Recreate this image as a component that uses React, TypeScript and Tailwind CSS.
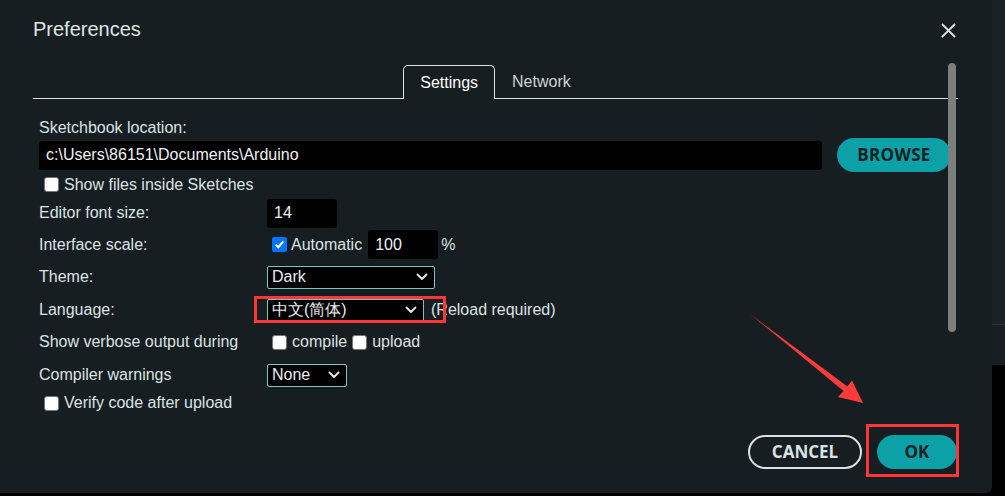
import React from "react"

const font = { fontFamily: '"Liberation Sans", Arial, sans-serif' }

function Chevron() {
  return (
    <svg width="12" height="8" viewBox="0 0 12 8" className="shrink-0">
      <path d="M1.5 1.5 L6 6 L10.5 1.5" fill="none" stroke="#e6eaea" strokeWidth="1.8" strokeLinecap="round" strokeLinejoin="round" />
    </svg>
  )
}

function Select({ value, width }: { value: string; width: string }) {
  return (
    <div className={`${width} h-[23px] bg-black border border-[#7cc4c6] rounded-[2px] flex items-center justify-between pl-[4px] pr-[6px] text-[16px] text-[#e8eded]`}>
      <span>{value}</span>
      <Chevron />
    </div>
  )
}

function Box({ checked = false }: { checked?: boolean }) {
  if (checked) {
    return (
      <span className="w-[15px] h-[15px] rounded-[2px] bg-[#0075ff] flex items-center justify-center shrink-0">
        <svg width="11" height="11" viewBox="0 0 11 11">
          <path d="M1.8 5.6 L4.3 8.2 L9.3 2.4" fill="none" stroke="white" strokeWidth="2" />
        </svg>
      </span>
    )
  }
  return <span className="w-[15px] h-[15px] rounded-[3px] bg-white border border-[#767676] shrink-0" />
}

function Row({ h, label, children }: { h: string; label?: string; children?: React.ReactNode }) {
  return (
    <div className={`${h} flex items-center`}>
      <div className="w-[228px] shrink-0">{label}</div>
      {children}
    </div>
  )
}

export default function App() {
  return (
    <div className="w-[1005px] h-[496px] bg-black relative overflow-hidden flex flex-col" style={font}>
      <div className="flex h-[493px]">
        {/* dialog */}
        <div className="w-[992px] h-full bg-[#171e21] rounded-br-[6px] relative flex flex-col text-[#dae3e3]">
          <div className="flex items-center justify-between pl-[33px] pr-[36px] pt-[13px] h-[44px]">
            <span className="text-[20px] text-[#dfe5e5]">Preferences</span>
            <svg width="15" height="15" viewBox="0 0 15 15" className="mt-[3px]">
              <path d="M1 1 L14 14 M14 1 L1 14" stroke="#dae3e3" strokeWidth="1.8" />
            </svg>
          </div>

          {/* tabs */}
          <div className="ml-[33px] w-[925px] mt-[21px] h-[34px] border-b border-[#dae3e3] flex justify-center items-end">
            <div className="h-[34px] px-[16px] border border-b-0 border-[#dae3e3] rounded-t-[5px] bg-[#171e21] -mb-px flex items-center text-[16px] text-white">
              Settings
            </div>
            <div className="h-[33px] px-[17px] flex items-center text-[16px] text-[#cdd3d3]">Network</div>
          </div>

          {/* settings */}
          <div className="pl-[39px] pt-[19px] flex flex-col text-[16px]">
            <div className="h-[20px] flex items-center">Sketchbook location:</div>
            <div className="h-[34px] flex items-center">
              <div className="w-[783px] h-[29px] bg-black rounded-[3px] flex items-center pl-[7px] text-[#eef2f2]">
                c:\Users\86151\Documents\Arduino
              </div>
              <div
                className="ml-[15px] w-[114px] h-[34px] rounded-full bg-[#0ca1a6] flex items-center justify-center text-[17px] font-bold text-[#172024] tracking-[0.3px]"
                style={{ fontFamily: '"Open Sans", sans-serif' }}
              >
                BROWSE
              </div>
            </div>
            <div className="h-[25px] flex items-center pl-[5px] gap-[5px]">
              <Box />
              <span>Show files inside Sketches</span>
            </div>
            <Row h="h-[32px]" label="Editor font size:">
              <div className="w-[70px] h-[29px] bg-black rounded-[3px] flex items-center pl-[7px] text-[#eef2f2]">14</div>
            </Row>
            <Row h="h-[31px]" label="Interface scale:">
              <div className="flex items-center pl-[5px] gap-[4px]">
                <Box checked />
                <span>Automatic</span>
              </div>
              <div className="ml-[6px] w-[70px] h-[29px] bg-black rounded-[3px] flex items-center pl-[7px] text-[#eef2f2]">100</div>
              <span className="ml-[3px]">%</span>
            </Row>
            <Row h="h-[34px]" label="Theme:">
              <Select value="Dark" width="w-[168px]" />
            </Row>
            <Row h="h-[32px]" label="Language:">
              <Select value="中文(简体)" width="w-[157px]" />
              <span className="ml-[7px]">(Reload required)</span>
            </Row>
            <Row h="h-[32px]" label="Show verbose output during">
              <div className="flex items-center pl-[5px] gap-[5px]">
                <Box />
                <span>compile</span>
                <Box />
                <span>upload</span>
              </div>
            </Row>
            <Row h="h-[34px]" label="Compiler warnings">
              <Select value="None" width="w-[80px]" />
            </Row>
            <div className="h-[22px] flex items-center pl-[5px] gap-[5px]">
              <Box />
              <span>Verify code after upload</span>
            </div>
          </div>

          {/* footer */}
          <div className="mt-auto pb-[24px] pr-[35px] flex justify-end gap-[15px]" style={{ fontFamily: '"Open Sans", sans-serif' }}>
            <div className="w-[114px] h-[34px] rounded-full border-2 border-[#dae3e3] flex items-center justify-center text-[17px] font-bold text-[#dae3e3]">
              CANCEL
            </div>
            <div className="w-[80px] h-[34px] rounded-full bg-[#0ca1a6] flex items-center justify-center text-[17px] font-bold text-[#172024]">
              OK
            </div>
          </div>

          {/* scrollbar */}
          <div className="absolute left-[948px] top-[63px] w-[8px] h-[269px] rounded-full bg-[#7b7f80]" />
        </div>

        {/* right strip behind the dialog */}
        <div className="flex-1 flex flex-col">
          <div className="h-[325px] bg-[#1b2225] border-b border-[#2b3235]" />
          <div className="h-[40px] bg-[#181e21]" />
          <div className="flex-1 bg-black" />
        </div>
      </div>
      <div className="h-[3px] bg-black" />

      {/* red annotations */}
      <div className="absolute left-[254px] top-[296px] w-[192px] h-[27px] border-[3px] border-[#ff3636]" />
      <div className="absolute left-[866px] top-[424px] w-[93px] h-[53px] border-[3px] border-[#ff3636]" />
      <svg className="absolute left-0 top-0" width="1005" height="496" viewBox="0 0 1005 496">
        <polygon
          points="750,314 847.4,386.6 852,380.5 863,403 838,397 843.6,390.9"
          fill="#ff3b3b"
        />
      </svg>
    </div>
  )
}
